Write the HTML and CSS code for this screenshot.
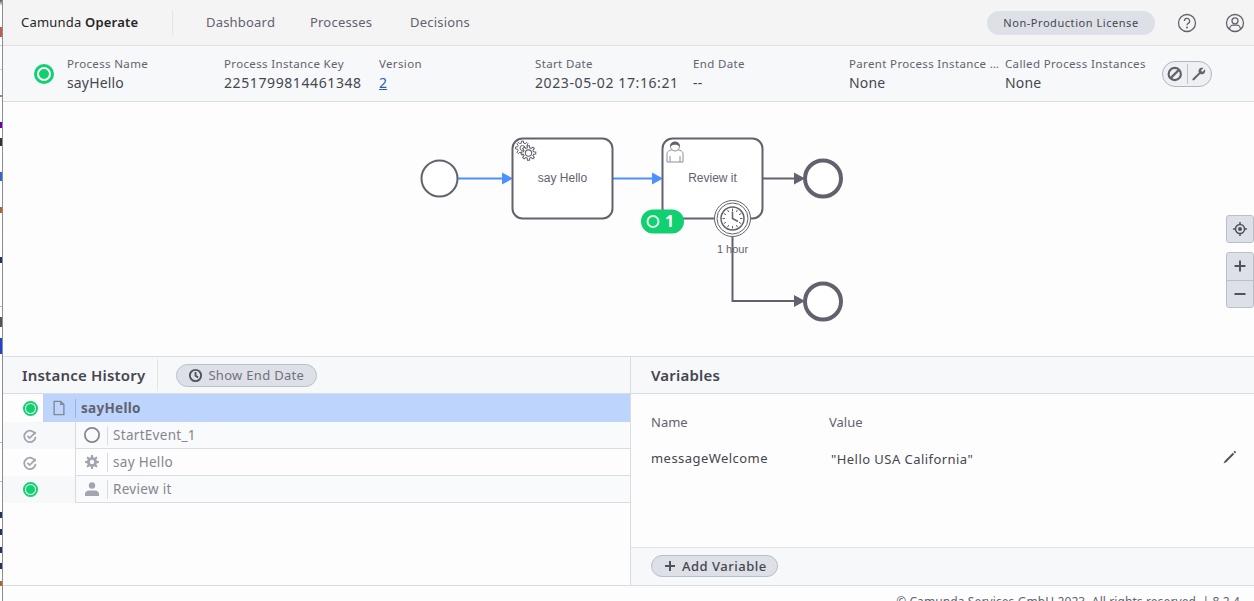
FILE: index.html
```html
<!DOCTYPE html>
<html lang="en">
	<head>
		<meta charset="UTF-8">
		<title>Camunda Operate</title>
		<link rel="stylesheet" href="styles.css">
	</head>
	<body>
		<div class="edge"></div>
		<div class="app">
			<header class="top">
				<div class="brand">Camunda <b>Operate</b></div>
				<nav class="nav">
					<a>Dashboard</a>
					<a>Processes</a>
					<a>Decisions</a>
				</nav>
				<div class="license">Non-Production License</div>
				<svg class="topIcon help" viewBox="0 0 20 20">
					<circle cx="10" cy="10" r="8.5"/>
					<path d="M7.4 8a2.6 2.6 0 1 1 3.8 2.3c-.8.5-1.2.9-1.2 2"/>
					<circle class="dot" cx="10" cy="14.6" r="1"/>
				</svg>
				<svg class="topIcon user" viewBox="0 0 20 20">
					<circle cx="10" cy="10" r="8.5"/>
					<circle cx="10" cy="7.8" r="3"/>
					<path d="M4.6 16.2c0-2.8 2-4 3.4-4h4c1.4 0 3.4 1.2 3.4 4"/>
				</svg>
			</header>

			<section class="instance">
				<span class="statusBig"></span>
				<div class="fields">
					<div><label>Process Name</label><p>sayHello</p></div>
					<div><label>Process Instance Key</label><p class="num">2251799814461348</p></div>
					<div><label>Version</label><p><a>2</a></p></div>
					<div><label>Start Date</label><p class="num">2023-05-02 17:16:21</p></div>
					<div><label>End Date</label><p>--</p></div>
					<div><label class="cut">Parent Process Instance Key</label><p>None</p></div>
					<div><label>Called Process Instances</label><p>None</p></div>
				</div>
				<div class="ops">
					<svg viewBox="0 0 16 16">
						<circle cx="8" cy="8" r="5.6"/>
						<path d="M4 12 12 4"/>
					</svg>
					<i></i>
					<svg viewBox="0 0 16 16">
						<path class="fill" d="M2.3 12.4 8 6.9C7.4 5 8 3.4 9.5 2.6c1-.5 2-.5 2.9-.2L10 4.800l1.300 1.300 2.400-2.400c.4 1 .3 2.200-.3 3.100-.9 1.300-2.500 1.800-4.100 1.200l-5.600 5.800c-.8.500-2.100-.7-1.400-1.400z"/>
					</svg>
				</div>
			</section>

			<section class="diagram">
				<svg class="bpmn" viewBox="3 102 1251 254">
					<defs>
						<polygon id="gear" points="4.85,-1.21 6.93,-.97 6.93,.97 4.85,1.21 4.29,2.58 5.59,4.21 4.21,5.59 2.58,4.29 1.21,4.85 .97,6.93 -.97,6.93 -1.21,4.85 -2.58,4.29 -4.21,5.59 -5.59,4.21 -4.29,2.58 -4.85,1.21 -6.93,.97 -6.93,-.97 -4.85,-1.21 -4.29,-2.58 -5.59,-4.21 -4.21,-5.59 -2.58,-4.29 -1.21,-4.85 -.97,-6.93 .97,-6.93 1.21,-4.85 2.58,-4.29 4.21,-5.59 5.59,-4.21 4.29,-2.58"/>
					</defs>

					<path class="flowDone" d="M458 178.500H503"/>
					<path class="headDone" d="M502 172.500 513 178.500 502 184.500z"/>
					<path class="flowDone" d="M612 178.500H653"/>
					<path class="headDone" d="M652 172.500 663 178.500 652 184.500z"/>
					<path class="flow" d="M763 178.500H795"/>
					<path class="head" d="M794 172.500 805 178.500 794 184.500z"/>
					<path class="flow" d="M732.500 235V301H795"/>
					<path class="head" d="M794 295 805 301 794 307z"/>

					<circle class="start" cx="439.500" cy="178.500" r="18"/>
					<rect class="task" x="512.500" y="138.500" width="100" height="80" rx="10"/>
					<rect class="task" x="662.500" y="138.500" width="100" height="80" rx="10"/>
					<circle class="end" cx="823" cy="178.500" r="18"/>
					<circle class="end" cx="823" cy="301.500" r="18"/>

					<g class="gears">
						<g transform="translate(522.500 148)">
							<use href="#gear"/>
							<circle r="2.500"/>
						</g>
						<g transform="translate(528.500 153) scale(1.050)">
							<use href="#gear"/>
							<circle r="3"/>
						</g>
					</g>
					<text class="label" x="562.500" y="182">say Hello</text>

					<g class="person">
						<path d="M667 162V153.500c0-2 2-2.800 5-3.800h6c3 1 5 1.800 5 3.800V162z"/>
						<path d="M670 162V156M680 162V156"/>
						<circle cx="675" cy="146.500" r="4.500"/>
						<path class="hair" d="M670.300 147c-.6-3.500 1.800-5.200 4.700-5.200s5.300 1.700 4.700 5.200c-1.200-1.800-2.700-2.300-4.700-2.300s-3.500.5-4.700 2.300z"/>
					</g>
					<text class="label" x="712.500" y="182">Review it</text>

					<rect class="badge" x="641" y="209.500" width="43" height="24" rx="12"/>
					<circle class="badgeRing" cx="653" cy="221.500" r="5.500"/>
					<text class="badgeNum" x="669.500" y="227">1</text>

					<g class="timer">
						<circle cx="732.500" cy="218.500" r="18"/>
						<circle cx="732.500" cy="218.500" r="15.500"/>
						<circle class="face" cx="732.500" cy="218.500" r="11.500"/>
						<path class="ticks" d="M732.500 208.500v2.500M732.500 226v2.500M722.500 218.500h2.500M740 218.500h2.500M727.500 209.800l1.200 2.200M737.500 209.800l-1.200 2.200M723.800 213.500l2.200 1.200M741.200 213.500l-2.200 1.200M723.800 223.500l2.200-1.200M741.200 223.500l-2.200-1.200M727.500 227.200l1.200-2.200M737.500 227.200l-1.200-2.200"/>
						<path class="hands" d="M732.500 211.500v7l5.500 3"/>
					</g>
					<text class="label small" x="732.500" y="252.500">1 hour</text>
				</svg>

				<div class="zoomBox single">
					<button>
						<svg viewBox="0 0 16 16">
							<circle class="solid" cx="8" cy="8" r="2"/>
							<circle cx="8" cy="8" r="4.500"/>
							<path d="M8 1v2.500M8 12.500V15M1 8h2.500M12.500 8H15"/>
						</svg>
					</button>
				</div>
				<div class="zoomBox double">
					<button><svg viewBox="0 0 16 16"><path d="M8 2.500v11M2.500 8h11"/></svg></button>
					<button><svg viewBox="0 0 16 16"><path d="M2.500 8h11"/></svg></button>
				</div>
			</section>

			<main class="bottom">
				<section class="history">
					<div class="panelHead">
						<h2>Instance History</h2>
						<span class="headSep"></span>
						<button class="pill endDate">
							<svg viewBox="0 0 16 16">
								<circle cx="8" cy="8" r="6"/>
								<path d="M8 4.200V8.300l2.800 1.700"/>
							</svg>
							Show End Date
						</button>
					</div>
					<div class="tree">
						<div class="row root">
							<span class="state"><span class="dotActive"></span></span>
							<div class="cell selected">
								<span class="ico">
									<svg viewBox="0 0 16 18"><path class="line" d="M2.500 1.500H10L13.500 5V16.500H2.500zM10 1.500V5H13.500"/></svg>
								</span>
								<b>sayHello</b>
							</div>
						</div>
						<div class="row child alt">
							<span class="state">
								<svg class="done" viewBox="0 0 16 16">
									<path d="M14 6.200A6.500 6.500 0 1 0 14.400 9"/>
									<path d="M5 7.800 7.600 10.400 14.500 3.500"/>
								</svg>
							</span>
							<div class="cell">
								<span class="ico"><svg viewBox="0 0 18 18"><circle class="ring" cx="9" cy="9" r="8"/></svg></span>
								StartEvent_1
							</div>
						</div>
						<div class="row child">
							<span class="state">
								<svg class="done" viewBox="0 0 16 16">
									<path d="M14 6.200A6.500 6.500 0 1 0 14.400 9"/>
									<path d="M5 7.800 7.600 10.400 14.500 3.500"/>
								</svg>
							</span>
							<div class="cell">
								<span class="ico">
									<svg viewBox="-8 -8 16 16">
										<use class="solidGear" href="#gear"/>
										<circle class="hole" r="2.200"/>
									</svg>
								</span>
								say Hello
							</div>
						</div>
						<div class="row child alt">
							<span class="state"><span class="dotActive"></span></span>
							<div class="cell">
								<span class="ico">
									<svg viewBox="0 0 16 16">
										<circle class="solidPerson" cx="8" cy="4.500" r="3.200"/>
										<path class="solidPerson" d="M1 15v-2c0-2 2-3.500 4-3.500h6c2 0 4 1.500 4 3.500v2z"/>
									</svg>
								</span>
								Review it
							</div>
						</div>
					</div>
				</section>

				<section class="variables">
					<div class="panelHead"><h2>Variables</h2></div>
					<div class="varBody">
						<div class="varRow heads"><span>Name</span><span>Value</span></div>
						<div class="varRow data">
							<span>messageWelcome</span>
							<span class="val">"Hello USA California"</span>
							<svg class="pen" viewBox="0 0 14 14"><path d="M.5 13.500 1.800 10.800 9.800 2.800 11.200 4.200 3.200 12.200z"/><path d="M10.500 2.100 11.800.8 13.200 2.200 11.900 3.500z"/></svg>
						</div>
					</div>
					<div class="varFoot">
						<button class="pill addVar">
							<svg viewBox="0 0 12 12"><path d="M6 1v10M1 6h10"/></svg>
							Add Variable
						</button>
					</div>
				</section>
			</main>

			<footer class="foot">© Camunda Services GmbH 2023. All rights reserved. | 8.2.4</footer>
		</div>
	</body>
</html>
```

FILE: styles.css
```css
html,body{
	margin:0;
	padding:0;
	height:601px;
	overflow:hidden;
}
body{
	display:flex;
	background:#fdfdfe;
	color:#45464f;
	font-family:"Noto Sans","Liberation Sans",sans-serif;
	font-size:14px;
}
p,h2{
	margin:0;
}
svg{
	display:block;
}

/* the window behind, just a sliver of it */
.edge{
	width:2px;
	flex:none;
	border-right:1px solid #8d8d8d;
	background:linear-gradient(to bottom,
		#555 0,#fff 6px,#fff 27px,#c25a5a 27px,#c25a5a 37px,#fff 37px,
		#fff 45px,#ccc 45px,#ccc 46px,#fff 46px,
		#fff 69px,#ccc 69px,#ccc 70px,#fff 70px,
		#fff 95px,#888 95px,#888 97px,#fff 97px,
		#fff 122px,#60a 122px,#60a 128px,#fff 128px,
		#fff 138px,#333 138px,#333 146px,#fff 146px,
		#fff 172px,#36c 172px,#36c 181px,#fff 181px,
		#fff 207px,#a63 207px,#a63 213px,#fff 213px,
		#fff 257px,#236 257px,#236 263px,#fff 263px,
		#fff 306px,#bbb 306px,#bbb 307px,#fff 307px,
		#fff 317px,#555 317px,#555 327px,#fff 327px,
		#fff 338px,#24c 338px,#24c 354px,#fff 354px,
		#fff 442px,#bbb 442px,#bbb 443px,#fff 443px,
		#fff 481px,#bbb 481px,#bbb 482px,#fff 482px,
		#fff 512px,#236 512px,#236 518px,#fff 518px,
		#fff 529px,#236 529px,#236 535px,#fff 535px,
		#fff 547px,#236 547px,#236 553px,#fff 553px,
		#fff 563px,#236 563px,#236 569px,#fff 569px,
		#fff 581px,#a63 581px,#a63 586px,#fff 586px);
}
.app{
	flex:1;
	min-width:0;
	display:flex;
	flex-direction:column;
}

/* top bar */
.top{
	height:45px;
	flex:none;
	display:flex;
	align-items:center;
	background:#f4f4f5;
	border-bottom:1px solid #dfe1e6;
	padding-left:18px;
}
.brand{
	width:152px;
	height:24px;
	line-height:22px;
	font-size:13px;
	letter-spacing:.2px;
	color:#262626;
	border-right:1px solid #e2e3e6;
	box-sizing:border-box;
}
.brand b{
	font-weight:600;
}
.nav{
	display:grid;
	grid-template-columns:104px 100px auto;
	margin-left:33px;
	margin-bottom:2px;
	font-size:13px;
	letter-spacing:.2px;
	color:#62626e;
}
.license{
	margin-left:auto;
	width:168px;
	height:24px;
	line-height:23px;
	border-radius:12px;
	background:#dde0e7;
	text-align:center;
	font-size:11px;
	color:#45464f;
	letter-spacing:.55px;
}
.topIcon{
	width:20px;
	height:20px;
	fill:none;
	stroke:#62626e;
	stroke-width:1.300;
}
.topIcon .dot{
	fill:#62626e;
	stroke:none;
}
.help{
	margin-left:22px;
}
.user{
	margin-left:28px;
	margin-right:9px;
}

/* instance header */
.instance{
	height:55px;
	flex:none;
	display:flex;
	align-items:center;
	background:#f7f8fa;
	border-bottom:1px solid #d9dce3;
	padding-left:34px;
}
.statusBig{
	width:10px;
	height:10px;
	margin-top:1px;
	border:2px solid #fff;
	outline:3px solid #10d070;
	border-radius:50%;
	background:#10d070;
	flex:none;
}
.fields{
	display:grid;
	grid-template-columns:157px 155px 156px 158px 156px 156px 157px;
	margin-left:16px;
	padding-top:1px;
}
.fields label{
	display:block;
	font-size:11.500px;
	line-height:16px;
	color:#62626e;
	letter-spacing:.35px;
	white-space:nowrap;
}
.fields .cut{
	width:151px;
	overflow:hidden;
	text-overflow:ellipsis;
}
.fields p{
	font-size:14px;
	line-height:20px;
	margin-top:1px;
	letter-spacing:.15px;
	color:#45464f;
	white-space:nowrap;
}
.fields p.num{
	letter-spacing:.6px;
}
.fields a{
	color:#2a5fb0;
	text-decoration:underline;
}
.ops{
	display:flex;
	align-items:center;
	justify-content:space-between;
	width:48px;
	height:24px;
	margin-top:1px;
	border:1px solid #b0b5c2;
	border-radius:13px;
	background:#eef0f4;
}
.ops svg{
	width:18px;
	height:18px;
	margin:0 3px;
	fill:none;
	stroke:#62626e;
	stroke-width:2;
}
.ops .fill{
	fill:#62626e;
	stroke:none;
}
.ops i{
	width:1px;
	height:20px;
	background:#bfc3cd;
}

/* diagram */
.diagram{
	height:254px;
	flex:none;
	position:relative;
	background:#fdfdfe;
	border-bottom:1px solid #d9dce3;
}
.bpmn{
	width:1251px;
	height:254px;
}
.flow,.flowDone{
	fill:none;
	stroke-width:2;
}
.flow{
	stroke:#62626e;
}
.flowDone{
	stroke:#4d90ff;
}
.head{
	fill:#62626e;
}
.headDone{
	fill:#4d90ff;
}
.start{
	fill:#fff;
	stroke:#62626e;
	stroke-width:2;
}
.end{
	fill:#fff;
	stroke:#62626e;
	stroke-width:4;
}
.task{
	fill:#fff;
	stroke:#62626e;
	stroke-width:2;
}
.gears use,.gears circle{
	fill:#fff;
	stroke:#62626e;
	stroke-width:1;
}
.label{
	font-family:"Liberation Sans",Arial,sans-serif;
	font-size:12px;
	fill:#62626e;
	text-anchor:middle;
}
.label.small{
	font-size:11px;
}
.person path,.person circle{
	fill:#fff;
	stroke:#8d8f98;
	stroke-width:1;
}
.person .hair{
	fill:#62626e;
	stroke:none;
}
.badge{
	fill:#10d070;
}
.badgeRing{
	fill:none;
	stroke:#e4fbef;
	stroke-width:2;
}
.badgeNum{
	font-size:16px;
	font-weight:700;
	fill:#fff;
	text-anchor:middle;
}
.timer circle{
	fill:#fff;
	stroke:#62626e;
	stroke-width:1;
}
.timer .face{
	stroke-width:1.500;
}
.ticks,.hands{
	fill:none;
	stroke:#62626e;
}
.ticks{
	stroke-width:1;
}
.hands{
	stroke-width:1.500;
}
.zoomBox{
	position:absolute;
	right:0;
	width:28px;
	display:flex;
	flex-direction:column;
	border:1px solid #b9bfcb;
	border-radius:3px;
	background:#dde0e7;
	box-sizing:border-box;
}
.zoomBox.single{
	top:113px;
	height:28px;
}
.zoomBox.double{
	top:150px;
	height:56px;
}
.zoomBox button{
	flex:1;
	padding:0;
	border:0;
	background:none;
	display:flex;
	align-items:center;
	justify-content:center;
}
.zoomBox button+button{
	border-top:1px solid #b9bfcb;
}
.zoomBox svg{
	width:16px;
	height:16px;
	fill:none;
	stroke:#50525c;
	stroke-width:2;
}
.zoomBox .solid{
	fill:#50525c;
	stroke:none;
}
.single svg{
	stroke-width:1.500;
}

/* bottom panels */
.bottom{
	flex:1;
	min-height:0;
	display:flex;
	border-bottom:1px solid #d9dce3;
}
.history{
	width:627px;
	flex:none;
	border-right:1px solid #d9dce3;
}
.variables{
	flex:1;
	min-width:0;
	display:flex;
	flex-direction:column;
}
.panelHead{
	height:36px;
	display:flex;
	align-items:center;
	background:#f7f8fa;
	border-bottom:1px solid #d9dce3;
}
.panelHead h2{
	font-size:15px;
	font-weight:600;
	letter-spacing:.2px;
	color:#45464f;
}
.history .panelHead{
	padding-left:19px;
}
.variables .panelHead{
	padding-left:20px;
}
.headSep{
	width:1px;
	height:32px;
	margin-left:12px;
	background:#e2e3e6;
}
.pill{
	display:flex;
	align-items:center;
	font-family:inherit;
	border:1px solid #b9bfcb;
	border-radius:12px;
	background:#dde0e7;
	padding:0;
	box-sizing:border-box;
}
.endDate{
	width:141px;
	height:23px;
	margin-left:18px;
	padding-left:11px;
	gap:5px;
	font-size:13px;
	letter-spacing:.3px;
	color:#70727c;
}
.endDate svg{
	width:15px;
	height:15px;
	fill:none;
	stroke:#50525c;
	stroke-width:2;
}

/* history tree */
.tree{
	font-size:13.500px;
	letter-spacing:.3px;
	color:#85868f;
}
.row{
	display:flex;
	height:27px;
}
.root{
	height:28px;
}
.state{
	width:40px;
	flex:none;
	display:flex;
	align-items:center;
	justify-content:center;
	padding-left:14px;
	box-sizing:border-box;
}
.child .state{
	margin-right:32px;
}
.alt{
	background:linear-gradient(to right,#f7f8fa 75px,#fdfdfe 75px);
}
.alt .cell{
	background:#f9fafb;
}
.dotActive{
	width:9px;
	height:9px;
	border:1.500px solid #fff;
	outline:2px solid #10d070;
	border-radius:50%;
	background:#10d070;
}
.done{
	width:14px;
	height:14px;
	fill:none;
	stroke:#a2a5b0;
	stroke-width:2;
}
.cell{
	flex:1;
	display:flex;
	align-items:center;
	border-bottom:1px solid #d9dce3;
	border-left:1px solid #d9dce3;
	box-sizing:border-box;
}
.selected{
	border:0;
	background:#bdd4fd;
	color:#62626e;
}
.selected b{
	font-weight:700;
}
.ico{
	width:31px;
	height:19px;
	margin-right:5px;
	flex:none;
	display:flex;
	align-items:center;
	justify-content:center;
	border-right:1px solid #d9dce3;
}
.selected .ico{
	width:32px;
	border-color:#9fb2d6;
}
.ico svg{
	width:16px;
	height:16px;
}
.line,.ring{
	fill:none;
	stroke:#85868f;
	stroke-width:1.500;
}
.ring{
	stroke-width:2;
}
.solidGear{
	fill:#a2a5b0;
}
.hole{
	fill:#f9fafb;
}
.solidPerson{
	fill:#a2a5b0;
}

/* variables */
.varBody{
	flex:1;
	padding:18px 17px 0 20px;
	font-size:13px;
}
.varRow{
	display:flex;
	align-items:center;
	color:#45464f;
}
.varRow>span:first-child{
	width:178px;
}
.heads{
	color:#62626e;
	height:20px;
}
.data{
	height:20px;
	margin-top:16px;
	letter-spacing:.45px;
}
.val{
	margin-left:2px;
	margin-top:1px;
}
.pen{
	width:14px;
	height:14px;
	margin-left:auto;
	margin-top:-3px;
	fill:#50525c;
}
.varFoot{
	height:36px;
	flex:none;
	display:flex;
	align-items:center;
	padding:0 0 1px 20px;
	background:#f7f8fa;
	border-top:1px solid #e2e3e6;
}
.addVar{
	width:127px;
	height:22px;
	padding-left:12px;
	gap:6px;
	font-size:13px;
	font-weight:500;
	letter-spacing:.5px;
	color:#45464f;
}
.addVar svg{
	width:12px;
	height:12px;
	fill:none;
	stroke:#50525c;
	stroke-width:2;
}
.foot{
	height:15px;
	flex:none;
	box-sizing:border-box;
	overflow:hidden;
	font-size:12px;
	line-height:15px;
	letter-spacing:.1px;
	padding:8px 14px 0 0;
	text-align:right;
	color:#62626e;
}
```
